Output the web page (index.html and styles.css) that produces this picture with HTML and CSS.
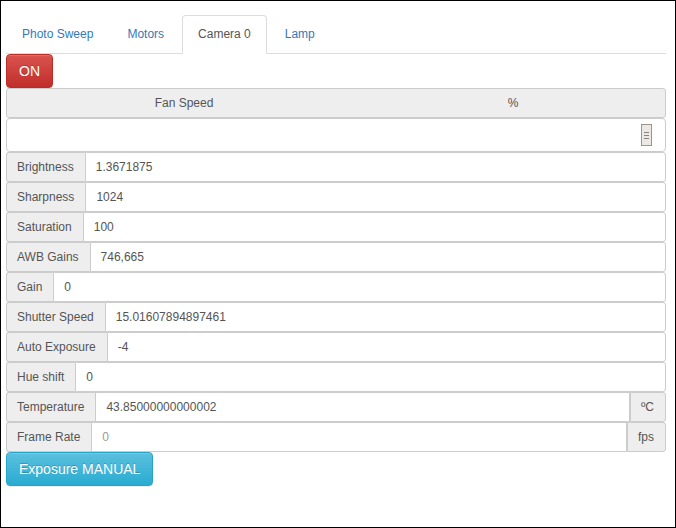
FILE: index.html
```html
<!DOCTYPE html>
<html>
<head>
<meta charset="utf-8">
<link rel="stylesheet" href="styles.css">
</head>
<body>
<div class="page">
  <ul class="tabs">
    <li><a href="#">Photo Sweep</a></li>
    <li><a href="#">Motors</a></li>
    <li class="active"><a href="#">Camera 0</a></li>
    <li><a href="#">Lamp</a></li>
  </ul>
  <button class="btn btn-danger">ON</button>
  <div class="fan-head">
    <div class="fan-cell">Fan Speed</div>
    <div class="fan-cell">%</div>
  </div>
  <div class="slider-row">
    <span class="thumb"><i></i><i></i><i></i></span>
  </div>
  <div class="group"><span class="addon">Brightness</span><span class="value">1.3671875</span></div>
  <div class="group"><span class="addon">Sharpness</span><span class="value">1024</span></div>
  <div class="group"><span class="addon">Saturation</span><span class="value">100</span></div>
  <div class="group"><span class="addon">AWB Gains</span><span class="value">746,665</span></div>
  <div class="group"><span class="addon">Gain</span><span class="value">0</span></div>
  <div class="group"><span class="addon">Shutter Speed</span><span class="value">15.01607894897461</span></div>
  <div class="group"><span class="addon">Auto Exposure</span><span class="value">-4</span></div>
  <div class="group"><span class="addon">Hue shift</span><span class="value">0</span></div>
  <div class="group"><span class="addon">Temperature</span><span class="value mid">43.85000000000002</span><span class="addon right">ºC</span></div>
  <div class="group"><span class="addon">Frame Rate</span><span class="value mid placeholder">0</span><span class="addon right">fps</span></div>
  <button class="btn btn-info">Exposure MANUAL</button>
</div>
</body>
</html>
```
FILE: styles.css
```css
* { box-sizing: border-box; }
html, body { margin: 0; padding: 0; }
body {
  width: 676px;
  height: 528px;
  border: 1px solid #000;
  background: #fff;
  font-family: "Liberation Sans", Arial, sans-serif;
  font-size: 12px;
  line-height: 1.42857;
  color: #333;
}
.page {
  padding: 14px 9px 0 5px;
  display: flex;
  flex-direction: column;
  align-items: flex-start;
}
.tabs {
  list-style: none;
  margin: 0;
  padding: 0;
  display: flex;
  width: 100%;
  border-bottom: 1px solid #ddd;
}
.tabs li { margin-bottom: -1px; margin-right: 2px; }
.tabs a {
  display: block;
  padding: 10px 15px;
  border: 1px solid transparent;
  border-radius: 4px 4px 0 0;
  color: #337ab7;
  text-decoration: none;
}
.tabs .active a {
  color: #555;
  background: #fff;
  border-color: #ddd #ddd transparent;
}
.btn {
  font-family: "Liberation Sans", Arial, sans-serif;
  font-size: 14px;
  line-height: 20px;
  padding: 6px 12px;
  border: 1px solid transparent;
  border-radius: 4px;
  color: #fff;
  text-shadow: 0 -1px 0 rgba(0,0,0,.2);
  box-shadow: inset 0 1px 0 rgba(255,255,255,.15), 0 1px 1px rgba(0,0,0,.075);
}
.btn-danger {
  background-image: linear-gradient(to bottom, #d9534f 0, #c12e2a 100%);
  border-color: #b92c28;
}
.btn-info {
  background-image: linear-gradient(to bottom, #5bc0de 0, #2aabd2 100%);
  border-color: #28a4c9;
}
.fan-head {
  width: 100%;
  height: 30px;
  display: grid;
  grid-template-columns: 354px 1fr;
  background: #eee;
  border: 1px solid #ccc;
  border-radius: 3px;
  color: #555;
}
.fan-cell {
  text-align: center;
  line-height: 28px;
}
.slider-row {
  width: 100%;
  height: 34px;
  border: 1px solid #ccc;
  border-radius: 4px;
  display: flex;
  justify-content: flex-end;
  align-items: center;
  padding-right: 13px;
}
.thumb {
  width: 11px;
  height: 22px;
  border: 1px solid #9c958e;
  background: #ece8e4;
  display: flex;
  flex-direction: column;
  justify-content: center;
  align-items: center;
  gap: 2px;
}
.thumb i {
  display: block;
  width: 5px;
  height: 1px;
  background: #8a847e;
}
.group {
  width: 100%;
  height: 30px;
  display: flex;
  color: #555;
}
.addon {
  padding: 0 11px 0 10px;
  line-height: 28px;
  background: #eee;
  border: 1px solid #ccc;
  border-right: 0;
  border-radius: 3px 0 0 3px;
  white-space: nowrap;
}
.addon.right {
  border-right: 1px solid #ccc;
  padding: 0 11px 0 10px;
  border-radius: 0 3px 3px 0;
}
.value {
  flex: 1;
  padding: 0 10px;
  line-height: 28px;
  border: 1px solid #ccc;
  border-radius: 0 3px 3px 0;
  background: #fff;
}
.value.mid { border-radius: 0; }
.placeholder { color: #999; }
```
